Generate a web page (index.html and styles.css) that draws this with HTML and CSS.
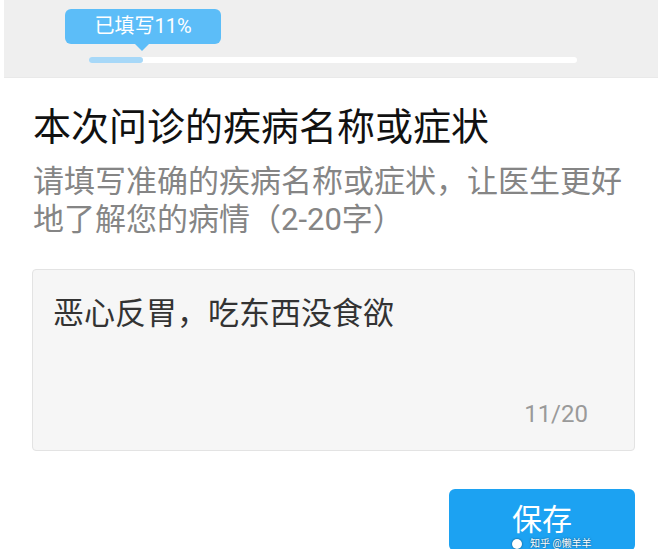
FILE: index.html
```html
<!DOCTYPE html>
<html lang="zh-CN">
<head>
<meta charset="UTF-8">
<meta name="viewport" content="width=device-width, initial-scale=1.0">
<title>问诊信息</title>
<link rel="stylesheet" href="styles.css">
</head>
<body>

<div class="progress-band">
  <div class="progress-tip">已填写11%</div>
  <div class="progress-bar">
    <div class="progress-fill" style="width: 11%"></div>
  </div>
</div>

<div class="content">
  <h2 class="question">本次问诊的疾病名称或症状</h2>
  <p class="hint">请填写准确的疾病名称或症状，让医生更好地了解您的病情（2-20字）</p>

  <div class="answer-box">
    <div class="answer-text">恶心反胃，吃东西没食欲</div>
    <div class="counter">11/20</div>
  </div>

  <div class="actions">
    <button class="button">保存</button>
  </div>
</div>

<div class="watermark"><span class="wm-icon"></span>知乎 @懒羊羊</div>

</body>
</html>
```

FILE: styles.css
```css
html, body {
  margin: 0;
  padding: 0;
  height: 549px;
  overflow: hidden;
}
body {
  font-family: Roboto, "Noto Sans CJK SC", sans-serif;
  background-color: #fff;
  position: relative;
}
.progress-band {
  margin-left: 4px;
  height: 78px;
  padding-top: 9px;
  box-sizing: border-box;
  background-color: #efefef;
  border-bottom: 1px solid #e9e9e9;
}
.progress-tip {
  position: relative;
  display: inline-block;
  margin-left: 61px;
  width: 156px;
  height: 35px;
  line-height: 35px;
  text-align: center;
  font-size: 20px;
  color: #fff;
  background-color: #5cbdf8;
  border-radius: 6px;
}
.progress-tip:after {
  content: "";
  position: absolute;
  left: 70px;
  bottom: -7px;
  border-left: 7px solid transparent;
  border-right: 7px solid transparent;
  border-top: 7px solid #5cbdf8;
}
.progress-bar {
  margin: 13px 0 0 85px;
  width: 488px;
  height: 6px;
  border-radius: 3px;
  background-color: #fff;
}
.progress-fill {
  height: 100%;
  border-radius: 3px;
  background-color: #a7d8f8;
}
.content {
  padding: 0 23px 0 32px;
}
.question {
  margin: 26px 0 0 1px;
  font-size: 38px;
  line-height: 46px;
  font-weight: normal;
  color: #111;
}
.hint {
  margin: 13px 0 0 1px;
  font-size: 31px;
  line-height: 38px;
  color: #858585;
}
.answer-box {
  margin-top: 30px;
  height: 182px;
  box-sizing: border-box;
  padding: 24px 46px 20px 20px;
  display: flex;
  flex-direction: column;
  justify-content: space-between;
  background-color: #f6f6f6;
  border: 1px solid #e3e3e3;
  border-radius: 4px;
}
.answer-text {
  font-size: 31px;
  line-height: 40px;
  color: #333;
}
.counter {
  text-align: right;
  font-size: 24px;
  line-height: 32px;
  color: #9a9a9a;
}
.actions {
  display: flex;
  justify-content: flex-end;
  margin-top: 38px;
}
.button {
  width: 186px;
  height: 62px;
  padding: 0;
  font-family: inherit;
  font-size: 30px;
  line-height: 30px;
  color: #fff;
  background-color: #1ca2f2;
  border: none;
  border-radius: 6px;
}
.watermark {
  position: absolute;
  left: 512px;
  top: 539px;
  display: flex;
  align-items: center;
  gap: 8px;
  font-size: 10px;
  line-height: 10px;
  color: #fff;
  text-shadow: 0 0 2px rgba(0, 0, 0, 0.6);
  white-space: nowrap;
}
.wm-icon {
  width: 10px;
  height: 10px;
  border-radius: 50%;
  background-color: #fff;
  box-shadow: 0 0 2px rgba(0, 0, 0, 0.6);
}
```
